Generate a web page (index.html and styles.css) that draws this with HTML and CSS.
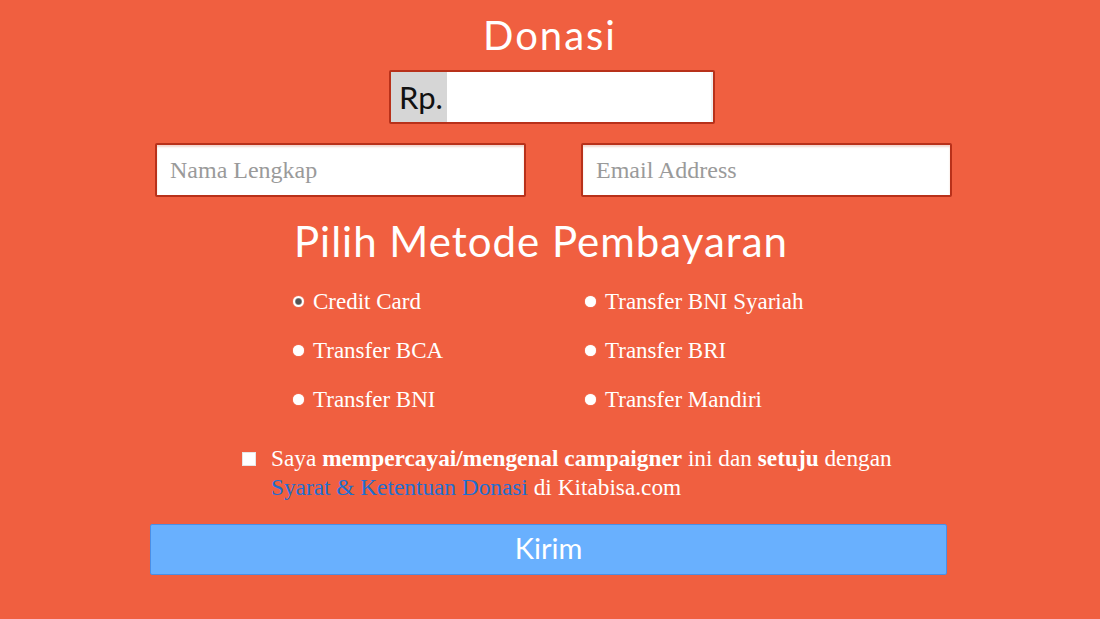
FILE: index.html
```html
<!DOCTYPE html>
<html lang="id">
<head>
<meta charset="utf-8">
<title>Donasi</title>
<link rel="stylesheet" href="styles.css">
</head>
<body>
<main class="page">
  <h1 class="title">Donasi</h1>
  <div class="amount">
    <span class="addon">Rp.</span>
    <input class="amount-input" type="text">
  </div>
  <div class="row">
    <input class="field" type="text" placeholder="Nama Lengkap">
    <input class="field" type="email" placeholder="Email Address">
  </div>
  <h2 class="subtitle">Pilih Metode Pembayaran</h2>
  <div class="methods">
    <label class="method"><input class="radio" type="radio" name="m" checked><span>Credit Card</span></label>
    <label class="method"><input class="radio" type="radio" name="m"><span>Transfer BNI Syariah</span></label>
    <label class="method"><input class="radio" type="radio" name="m"><span>Transfer BCA</span></label>
    <label class="method"><input class="radio" type="radio" name="m"><span>Transfer BRI</span></label>
    <label class="method"><input class="radio" type="radio" name="m"><span>Transfer BNI</span></label>
    <label class="method"><input class="radio" type="radio" name="m"><span>Transfer Mandiri</span></label>
  </div>
  <div class="terms">
    <input class="check" type="checkbox">
    <p class="terms-text">Saya <b>mempercayai/mengenal campaigner</b> ini dan <b>setuju</b> dengan <a class="link" href="#">Syarat &amp; Ketentuan Donasi</a> di Kitabisa.com</p>
  </div>
  <button class="submit" type="button">Kirim</button>
</main>
</body>
</html>
```

FILE: styles.css
```css
* { box-sizing: border-box; }
html, body { margin: 0; padding: 0; }
body {
  background: #f05f40;
  font-family: "Liberation Serif", "Times New Roman", serif;
  color: #fff;
  width: 1100px;
  height: 619px;
  overflow: hidden;
}
.page {
  display: flex;
  flex-direction: column;
}
.title {
  margin: 0;
  height: 70px;
  line-height: 70px;
  text-align: center;
  font-family: "Lato", "Noto Sans", sans-serif;
  font-weight: 400;
  font-size: 40px;
  letter-spacing: 2px;
  color: #fff;
}
.amount {
  display: flex;
  width: 326px;
  height: 54px;
  margin: 0 0 0 389px;
  border: 2px solid #b8311a;
  border-radius: 2px;
  background: #fff;
  overflow: hidden;
}
.addon {
  width: 56px;
  background: #d6d6d6;
  color: #111;
  font-family: "Lato", "Noto Sans", sans-serif;
  font-size: 31px;
  line-height: 50px;
  padding-left: 8px;
}
.amount-input {
  flex: 1;
  border: 0;
  outline: 0;
  background: #fff;
  box-shadow: inset -2px 0 0 #eee;
}
.row {
  display: flex;
  gap: 55px;
  padding-left: 155px;
  margin-top: 19px;
}
.field {
  width: 371px;
  height: 54px;
  border: 2px solid #b8311a;
  border-radius: 2px;
  background: #fff;
  box-shadow: inset 0 2px 2px rgba(200, 90, 60, 0.25);
  padding: 0 13px;
  font-family: "Liberation Serif", "Times New Roman", serif;
  font-size: 24px;
  color: #333;
  outline: 0;
}
.field::placeholder { color: #9a9a9a; }
.subtitle {
  margin: 8px 0 0;
  height: 72px;
  line-height: 72px;
  text-align: center;
  padding-right: 18px;
  font-family: "Lato", "Noto Sans", sans-serif;
  font-weight: 400;
  font-size: 42px;
  letter-spacing: 1px;
  color: #fff;
}
.methods {
  display: grid;
  grid-template-columns: 292px 292px;
  grid-auto-rows: 49px;
  padding-left: 293px;
}
.method {
  display: flex;
  align-items: center;
  gap: 9px;
  font-size: 23px;
  line-height: 49px;
  color: #fff;
}
.radio {
  appearance: none;
  -webkit-appearance: none;
  margin: 0;
  width: 11px;
  height: 11px;
  border-radius: 50%;
  background: #fff;
  box-shadow: 0 0 1px rgba(255,255,255,0.8);
  flex: none;
}
.radio:checked {
  background: radial-gradient(circle, #555 0 2.6px, #9a9a9a 3.2px, #fff 4px);
}
.terms {
  display: flex;
  align-items: flex-start;
  gap: 15px;
  padding-left: 242px;
  margin-top: 20px;
}
.check {
  appearance: none;
  -webkit-appearance: none;
  margin: 8px 0 0;
  width: 14px;
  height: 14px;
  background: #fff;
  border: 1px solid #e6e6e6;
  flex: none;
}
.terms-text {
  margin: 0;
  width: 650px;
  font-size: 23.3px;
  line-height: 29px;
  color: #fff;
}
.terms-text b { font-weight: 700; }
.link { color: #1f6fd0; text-decoration: none; }
.submit {
  margin: 22px 0 0 150px;
  width: 797px;
  height: 51px;
  background: #69b0fe;
  border: 1px solid #4a8fe6;
  border-radius: 2px;
  color: #fff;
  font-family: "Lato", "Noto Sans", sans-serif;
  font-size: 29px;
  padding: 0 0 5px;
}
```
